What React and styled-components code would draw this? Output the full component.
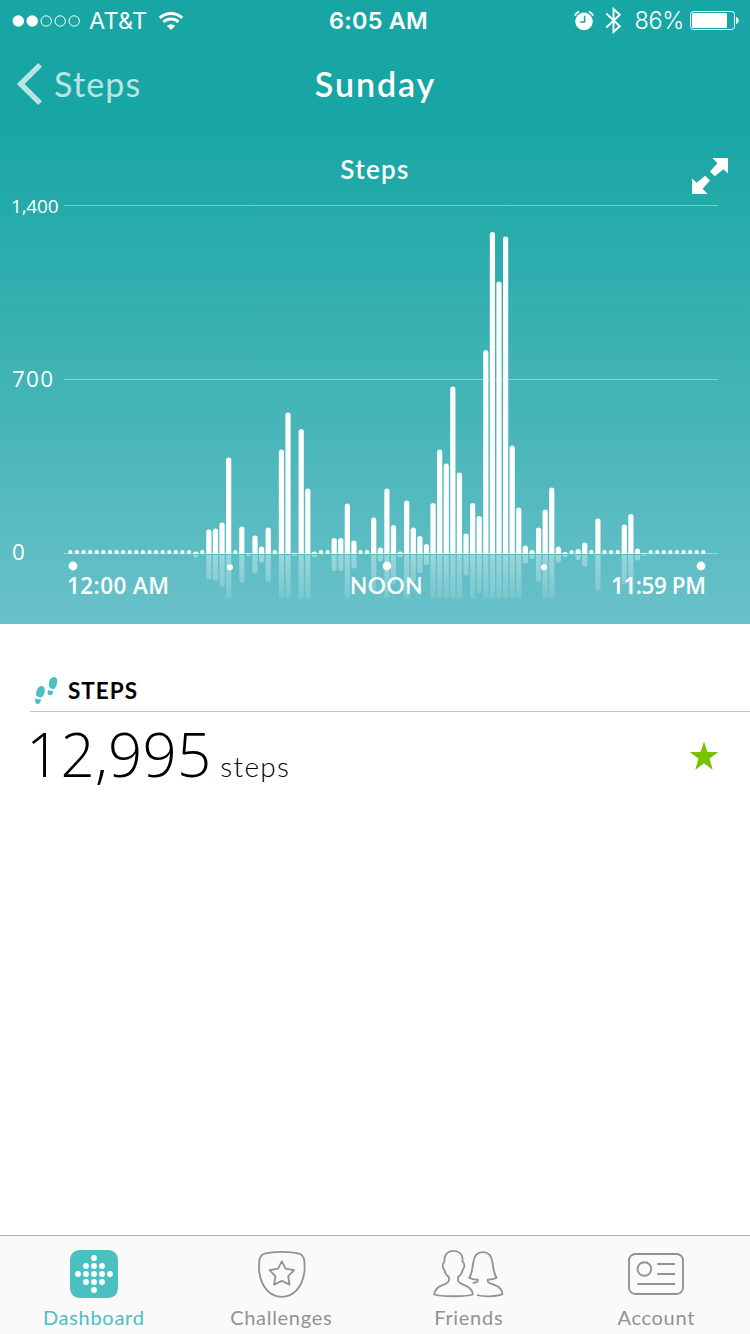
import React from "react";
import styled, { createGlobalStyle } from "styled-components";

const GlobalStyle = createGlobalStyle`
  * {
    box-sizing: border-box;
  }

  body {
    margin: 0;
    background-color: #ffffff;
    font-family: Lato, "Open Sans", sans-serif;
  }

  svg {
    display: block;
    flex-shrink: 0;
    overflow: visible;
  }
`;

const Screen = styled.div`
  display: flex;
  flex-direction: column;
  width: 750px;
  height: 1334px;
  overflow: hidden;
`;

const Hero = styled.header`
  display: flex;
  flex-direction: column;
  height: 624px;
  color: #ffffff;
  background: linear-gradient(#18a6a4 0, #18a6a4 125px, #48b6b9 430px, #6ac1ca 624px);
`;

const StatusBar = styled.div`
  display: grid;
  grid-template-columns: 1fr auto 1fr;
  align-items: center;
  height: 40px;
  padding: 1px 11px 0 12px;
  font-family: Inter, sans-serif;
  font-size: 23.5px;
`;

const StatusGroup = styled.div`
  display: flex;
  align-items: center;
  justify-content: ${({ $end }) => ($end ? "flex-end" : "flex-start")};
`;

const Carrier = styled.span`
  margin: 0 12px 0 8px;
  letter-spacing: 0.2px;
`;

const Time = styled.span`
  padding-left: 6px;
  font-weight: 600;
  letter-spacing: 0.2px;
`;

const BluetoothWrapper = styled.span`
  margin-left: 11px;
`;

const Percent = styled.span`
  margin: 0 6px 0 12px;
  font-weight: 300;
  letter-spacing: -0.3px;
`;

const NavBar = styled.nav`
  display: grid;
  grid-template-columns: 1fr auto 1fr;
  align-items: center;
  height: 88px;
  padding: 0 16px;
`;

const BackButton = styled.a`
  display: flex;
  align-items: center;
  gap: 11px;
  font-size: 34px;
  letter-spacing: 1.2px;
  opacity: 0.7;
`;

const BackLabel = styled.span`
  padding-bottom: 2px;
`;

const Title = styled.h1`
  margin: 0;
  padding: 0 0 2px 1px;
  font-size: 34px;
  font-weight: 600;
  letter-spacing: 1.9px;
`;

const ChartHeader = styled.div`
  display: grid;
  grid-template-columns: 1fr auto 1fr;
  height: 72px;
  padding: 25px 22px 0;
`;

const ChartTitle = styled.h2`
  grid-column: 2;
  margin: 0;
  font-size: 26px;
  font-weight: 600;
  line-height: 32px;
  letter-spacing: 1.3px;
`;

const ExpandButton = styled.a`
  justify-self: end;
  padding-top: 5px;
`;

const Content = styled.main`
  flex: 1;
  padding: 46px 0 0 30px;
`;

const SectionHeader = styled.div`
  display: flex;
  align-items: center;
  gap: 10px;
  height: 42px;
  padding-left: 5px;
  border-bottom: 1px solid #c8c8c8;
  color: #000000;
  font-size: 22.5px;
  font-weight: 700;
  letter-spacing: 1px;
`;

const Total = styled.div`
  display: flex;
  align-items: center;
  justify-content: space-between;
  height: 88px;
  padding-right: 32px;
`;

const Value = styled.span`
  margin-left: -4px;
  padding-top: 7px;
  font-family: "Open Sans", sans-serif;
  font-size: 60px;
  font-weight: 300;
  line-height: 84px;
  letter-spacing: 0.2px;
`;

const Unit = styled.span`
  margin-left: 9px;
  font-family: Lato, sans-serif;
  font-size: 28px;
  letter-spacing: 1.3px;
`;

const TabBar = styled.footer`
  display: flex;
  height: 99px;
  border-top: 1px solid #b2b2b2;
  background-color: #fafafa;
`;

const Tab = styled.a`
  display: flex;
  flex: 1;
  flex-direction: column;
  align-items: center;
  gap: 6px;
  padding-top: 14px;
  color: ${({ $active }) => ($active ? "#4bc0c1" : "#929292")};
  font-size: 20px;
  line-height: 26px;
  letter-spacing: 0.7px;
`;

const DOT = "dot";
const BASELINE = 553;

// height of each 15 minute bar, DOT where nothing was recorded
const bars = [
  ...Array(19).fill(DOT),
  2, DOT, 24, 25, 31, 96, DOT, 27, 0.6, 18, 7, 26, DOT,
  104, 141, 0.6, 124.5, 65, 2, DOT, DOT, 15.5, 15.5, 50, 13, DOT, DOT,
  36, 6, 65, 28.5, 2, 53, 26, 17.5, 9.5, 50.5, 104, 90, 167, 81,
  20, 50.5, 37.5, 203.5, 321.5, 272, 317, 108, 46, 8, 3.5, 26, 44, 66,
  7, 1.5, DOT, 4.5, 11, DOT, 35, DOT, DOT, DOT, 29, 39.5, 5, 0.6,
  ...Array(9).fill(DOT),
];

function StepsChart() {
  return (
    <svg width="750" height="424" viewBox="0 200 750 424">
      <defs>
        <linearGradient id="reflection" gradientUnits="userSpaceOnUse" x1="0" y1="554" x2="0" y2="606">
          <stop offset="0" stopColor="#fff" stopOpacity="0.38" />
          <stop offset="0.45" stopColor="#fff" stopOpacity="0.25" />
          <stop offset="0.84" stopColor="#fff" stopOpacity="0.13" />
          <stop offset="0.85" stopColor="#fff" stopOpacity="0.03" />
          <stop offset="1" stopColor="#fff" stopOpacity="0" />
        </linearGradient>
      </defs>
      <g fill="#fff" fillOpacity="0.4">
        <rect x="64" y="205" width="654" height="1" />
        <rect x="64" y="379" width="654" height="1" />
        <rect x="64" y="553" width="654" height="1" />
      </g>
      {bars.map((value, index) => {
        const x = 70.4 + index * 6.594;

        if (value === DOT) {
          return <circle key={index} cx={x} cy="552" r="2.1" fill="#fff" />;
        }

        const top = BASELINE + 0.5 - value;
        const r = Math.min(2.6, value);
        const left = x - 2.6;
        const right = x + 2.6;
        const end = 555 + value;

        return (
          <g key={index}>
            <path
              fill="#fff"
              d={`M${left} 554V${top + r}Q${left} ${top} ${x} ${top}T${right} ${top + r}V554Z`}
            />
            <path
              fill="url(#reflection)"
              d={`M${left} 555V${end - r + 0.5}Q${left} ${end + 0.5} ${x} ${end + 0.5}T${right} ${end - r + 0.5}V555Z`}
            />
          </g>
        );
      })}
      <g fill="#fff">
        <circle cx="73" cy="566" r="4.4" />
        <circle cx="230" cy="567.3" r="3" />
        <circle cx="387" cy="566" r="4.4" />
        <circle cx="544" cy="567.3" r="3" />
        <circle cx="701" cy="566" r="4.4" />
      </g>
      <g fill="#fff" fontFamily="Open Sans, sans-serif">
        <text x="11" y="213" fontSize="19" textLength="47.5">1,400</text>
        <text x="12" y="387" fontSize="22.5" textLength="41">700</text>
        <text x="12" y="560" fontSize="22.5">0</text>
        <g fontSize="22.5" fontWeight="600">
          <text x="67" y="594" textLength="102">12:00 AM</text>
          <text x="350" y="594" textLength="72.5" fontFamily="Lato, sans-serif">NOON</text>
          <text x="611" y="594" textLength="95">11:59 PM</text>
        </g>
      </g>
    </svg>
  );
}

function SignalIcon() {
  return (
    <svg width="69" height="12" viewBox="0 0 69 12">
      {[6.3, 20.2, 34.2, 48.2, 62.2].map((cx, index) => (
        <circle
          key={cx}
          cx={cx}
          cy="6"
          r={index < 2 ? 5.7 : 5.2}
          fill={index < 2 ? "#fff" : "none"}
          stroke={index < 2 ? "none" : "#fff"}
        />
      ))}
    </svg>
  );
}

function WifiIcon() {
  return (
    <svg width="24" height="18" viewBox="0 0 24 18" fill="none" stroke="#fff" strokeWidth="3">
      <path d="M.8 5.8A16.6 16.6 0 0 1 23.2 5.8" />
      <path d="M4.6 10A10.9 10.9 0 0 1 19.4 10" />
      <path d="M12 18 7.8 13.8A6.2 6.2 0 0 1 16.2 13.8Z" fill="#fff" stroke="none" />
    </svg>
  );
}

function AlarmIcon() {
  return (
    <svg width="20" height="20" viewBox="0 0 20 20" fill="none">
      <circle cx="10" cy="10.4" r="8.8" fill="#fff" />
      <path d="M1 4.7A6 6 0 0 1 5.2 .8M19 4.7A6 6 0 0 0 14.8 .8" stroke="#fff" strokeWidth="1.6" />
      <path d="M10.6 4.8V11H6.2" stroke="#18a6a4" strokeWidth="1.5" />
    </svg>
  );
}

function BluetoothIcon() {
  return (
    <svg width="17" height="27" viewBox="0 0 17 27" fill="none" stroke="#fff" strokeWidth="1.9">
      <path d="M1.3 6.5 14.8 19.2 8.5 25V2L14.8 7.8 1.3 20.5" />
    </svg>
  );
}

function BatteryIcon() {
  return (
    <svg width="49" height="19" viewBox="0 0 49 19">
      <rect x=".5" y=".5" width="44" height="18" rx="3" fill="none" stroke="#fff" />
      <rect x="2" y="2" width="35" height="15" rx="1.5" fill="#fff" />
      <path d="M46 6C49.6 6.8 49.6 12.2 46 13Z" fill="#fff" />
    </svg>
  );
}

function BackIcon() {
  return (
    <svg width="27" height="42" viewBox="0 0 27 42" fill="none" stroke="#fff" strokeWidth="5.4">
      <path d="M24.1 1.8 4.7 21 24.1 40.2" />
    </svg>
  );
}

function ExpandIcon() {
  return (
    <svg width="36" height="36" viewBox="0 0 36 36" fill="#fff">
      <path d="M20.5 0H36V15.5L31.4 11.2 22.8 18.2 18 13.6 25.4 5.2Z" />
      <path d="M15.5 36H0V20.5L4.6 24.8 13.2 17.8 18 22.4 10.6 30.8Z" />
    </svg>
  );
}

function FootprintsIcon() {
  return (
    <svg width="23" height="28" viewBox="0 0 23 28" fill="#4bc0c1">
      <path d="M19.4 0C22 .2 22.7 3.2 21.9 6.4C21.2 9 20.5 12.2 17.6 11.9C14.2 11.5 13.5 9 14 5.8C14.4 2.6 16.5-.2 19.4 0Z" />
      <path d="M13.3 13.1C15 13.9 16.6 14 18.5 13.9C18.1 16.5 16.8 18.3 14.8 18.2C12.3 18 12.2 15.4 13.3 13.1Z" />
      <path d="M6.9 9C9.7 9.4 10.4 12.6 9.5 15.5C8.7 18.2 7.6 21 4.7 20.3C1.4 19.6.5 17.7 1.4 14.7C2.3 11.5 4.1 8.6 6.9 9Z" />
      <path d="M.4 21.4C2.3 22.2 3.9 22.5 6 22.3C5.8 25 4.9 27 2.8 26.9C.3 26.7-.3 24 .4 21.4Z" />
    </svg>
  );
}

function StarIcon() {
  return (
    <svg width="28" height="28" viewBox="0 0 28 28" fill="#77c100">
      <path d="M14-.5 17.4 10.1H28.3L19.5 16.8 22.8 28 14 21.2 5.2 28 8.5 16.8-.3 10.1H10.6Z" />
    </svg>
  );
}

function DashboardIcon() {
  const rows = [[24], [16, 24, 32], [8, 16, 24, 32, 40], [16, 24, 32], [24]];

  return (
    <svg width="48" height="48" viewBox="0 0 48 48">
      <rect width="48" height="48" rx="9.5" fill="#4bc0c1" />
      {rows.map((row, index) => row.map((cx) => (
        <circle key={`${index}-${cx}`} cx={cx} cy={8 + index * 8} r="2.9" fill="#fff" />
      )))}
    </svg>
  );
}

function ChallengesIcon() {
  return (
    <svg width="48" height="48" viewBox="-.8 0 48 48" fill="none" stroke="#929292" strokeWidth="1.8">
      <path d="M24 1.9C17 1.9 11 2.6 7 3.7C3.5 4.6 2 6.8 1.5 10.8C1.1 15 .8 18.5 1.6 23C3.8 37 12 46.8 24 46.8S44.2 37 46.4 23C47.2 18.5 46.9 15 46.5 10.8C46 6.8 44.5 4.6 41 3.7C37 2.6 31 1.9 24 1.9Z" />
      <path d="M24 11.3 27.7 18.7 36.3 20.1 30.4 26.2 31.7 34.6 24 30.9 16.3 34.6 17.6 26.2 11.7 20.1 20.3 18.7Z" strokeLinejoin="round" />
    </svg>
  );
}

function FriendsIcon() {
  return (
    <svg width="70" height="48" viewBox=".8 0 70 48" fill="none" stroke="#929292" strokeWidth="1.8" strokeLinejoin="round">
      <path d="M20.3.9C14.5.9 11.2 4.5 11.2 9.5V12C9 13 8.8 17.5 11 19.5C11.6 23 13.4 25.5 15.8 27.3V30C15.8 32.5 13 33.7 10 34.8C4.5 36.7 1.3 39 1 44.5C7 46.8 34 46.8 39.7 44.5C39.4 39 36 36.7 30.6 34.8C27.6 33.7 24.8 32.5 24.8 30V27.3C27.2 25.5 29 23 29.6 19.5C31.8 17.5 31.6 13 29.4 12V9.5C29.4 4.5 26.1.9 20.3.9Z" />
      <path d="M39.5 32.9C42 33 44.7 32.3 44.7 31V29.6C41.5 30 38.2 29 36 27.8C39 24 39 18 40.2 12C41 5.5 44 2.1 49.7 2.1S58.3 5.5 59.2 12C60.3 18 60.5 24 63.4 27.8C61 29 58 29.8 54.5 29.6V31C54.5 33 58 33.8 61 34.8C66 36.5 69.2 39.5 69.3 44.2C63 46.8 50.5 47 43.7 45" />
    </svg>
  );
}

function AccountIcon() {
  return (
    <svg width="56" height="48" viewBox="0 0 56 48" fill="none" stroke="#929292" strokeWidth="1.9">
      <rect x="1" y="4" width="54" height="40" rx="6.2" />
      <circle cx="16.4" cy="19" r="6.8" />
      <path d="M29.3 14H47M29.3 24H47M9.3 34H47" />
    </svg>
  );
}

const tabs = [
  { name: "Dashboard", Icon: DashboardIcon },
  { name: "Challenges", Icon: ChallengesIcon },
  { name: "Friends", Icon: FriendsIcon },
  { name: "Account", Icon: AccountIcon },
];

function App() {
  return (
    <>
      <GlobalStyle />
      <Screen>
        <Hero>
          <StatusBar>
            <StatusGroup>
              <SignalIcon />
              <Carrier>AT&amp;T</Carrier>
              <WifiIcon />
            </StatusGroup>
            <Time>6:05 AM</Time>
            <StatusGroup $end>
              <AlarmIcon />
              <BluetoothWrapper>
                <BluetoothIcon />
              </BluetoothWrapper>
              <Percent>86%</Percent>
              <BatteryIcon />
            </StatusGroup>
          </StatusBar>
          <NavBar>
            <BackButton>
              <BackIcon />
              <BackLabel>Steps</BackLabel>
            </BackButton>
            <Title>Sunday</Title>
          </NavBar>
          <ChartHeader>
            <ChartTitle>Steps</ChartTitle>
            <ExpandButton>
              <ExpandIcon />
            </ExpandButton>
          </ChartHeader>
          <StepsChart />
        </Hero>
        <Content>
          <SectionHeader>
            <FootprintsIcon />
            STEPS
          </SectionHeader>
          <Total>
            <Value>
              12,995
              <Unit>steps</Unit>
            </Value>
            <StarIcon />
          </Total>
        </Content>
        <TabBar>
          {tabs.map(({ name, Icon }) => (
            <Tab key={name} $active={name === "Dashboard"}>
              <Icon />
              {name}
            </Tab>
          ))}
        </TabBar>
      </Screen>
    </>
  );
}

export default App;
